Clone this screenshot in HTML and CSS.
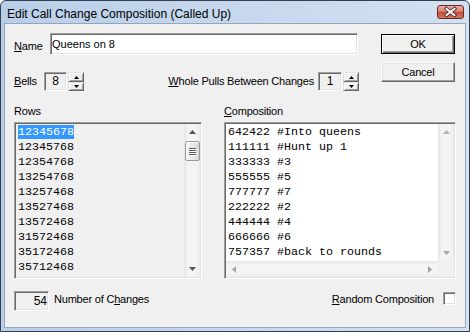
FILE: index.html
```html
<!DOCTYPE html>
<html>
<head>
<meta charset="utf-8">
<link rel="stylesheet" href="styles.css">
</head>
<body>
<div class="window">
  <div class="titlebar">
    <span class="title">Edit Call Change Composition (Called Up)</span>
    <div class="close">
      <svg width="27" height="14" viewBox="0 0 27 14">
        <defs>
          <linearGradient id="cg" x1="0" y1="0" x2="0" y2="1">
            <stop offset="0" stop-color="#eab2a6"/>
            <stop offset="0.45" stop-color="#d98373"/>
            <stop offset="0.5" stop-color="#c44a3c"/>
            <stop offset="1" stop-color="#d97a66"/>
          </linearGradient>
        </defs>
        <rect x="0.5" y="0.5" width="26" height="13" rx="2.5" fill="url(#cg)" stroke="#6b2b24"/>
        <path d="M9.5 3.8 L17.5 10.2 M17.5 3.8 L9.5 10.2" stroke="#4a2420" stroke-width="3.6" stroke-linecap="square"/>
        <path d="M9.5 3.8 L17.5 10.2 M17.5 3.8 L9.5 10.2" stroke="#ffffff" stroke-width="2" stroke-linecap="square"/>
      </svg>
    </div>
  </div>
  <div class="client">
    <div class="top">
      <div class="top-left">
        <div class="name-row">
          <span class="name-label"><u>N</u>ame</span>
          <div class="name-input sunken">Queens on 8</div>
        </div>
        <div class="bells-row">
          <span class="bells-label"><u>B</u>ells</span>
          <div class="num-edit sunken w23">8</div>
          <div class="spin">
            <div class="spin-btn up"><svg width="5" height="3" viewBox="0 0 5 3"><polygon points="0,3 2.5,0 5,3" fill="#000"/></svg></div>
            <div class="spin-btn down"><svg width="5" height="3" viewBox="0 0 5 3"><polygon points="0,0 2.5,3 5,0" fill="#000"/></svg></div>
          </div>
          <span class="pulls-label"><u>W</u>hole Pulls Between Changes</span>
          <div class="num-edit sunken w24">1</div>
          <div class="spin">
            <div class="spin-btn up"><svg width="5" height="3" viewBox="0 0 5 3"><polygon points="0,3 2.5,0 5,3" fill="#000"/></svg></div>
            <div class="spin-btn down"><svg width="5" height="3" viewBox="0 0 5 3"><polygon points="0,0 2.5,3 5,0" fill="#000"/></svg></div>
          </div>
        </div>
      </div>
      <div class="buttons">
        <div class="btn default">OK</div>
        <div class="btn cancel">Cancel</div>
      </div>
    </div>

    <div class="panes">
      <div class="pane">
        <div class="pane-label">Rows</div>
        <div class="list rows sunken">
          <div class="rows-content">
            <div class="row"><span class="sel">12345678</span></div>
            <div class="row">12345768</div>
            <div class="row">12354768</div>
            <div class="row">13254768</div>
            <div class="row">13257468</div>
            <div class="row">13527468</div>
            <div class="row">13572468</div>
            <div class="row">31572468</div>
            <div class="row">35172468</div>
            <div class="row">35712468</div>
          </div>
          <div class="vscroll">
            <div class="sb-btn"><svg width="7" height="4" viewBox="0 0 7 4"><polygon points="0,4 3.5,0 7,4" fill="#555555"/></svg></div>
            <div class="thumb">
              <div class="grip"></div><div class="grip"></div><div class="grip"></div><div class="grip"></div>
            </div>
            <div class="sb-space"></div>
            <div class="sb-btn"><svg width="7" height="4" viewBox="0 0 7 4"><polygon points="0,0 3.5,4 7,0" fill="#555555"/></svg></div>
          </div>
        </div>
      </div>
      <div class="pane">
        <div class="pane-label"><u>C</u>omposition</div>
        <div class="list comp sunken">
          <div class="comp-content">
            <div class="line">642422 #Into queens</div>
            <div class="line">111111 #Hunt up 1</div>
            <div class="line">333333 #3</div>
            <div class="line">555555 #5</div>
            <div class="line">777777 #7</div>
            <div class="line">222222 #2</div>
            <div class="line">444444 #4</div>
            <div class="line">666666 #6</div>
            <div class="line">757357 #back to rounds</div>
          </div>
          <div class="vscroll comp-v">
            <div class="sb-btn"><svg width="7" height="4" viewBox="0 0 7 4"><polygon points="0,4 3.5,0 7,4" fill="#b4b4b4"/></svg></div>
            <div class="sb-space"></div>
            <div class="sb-btn"><svg width="7" height="4" viewBox="0 0 7 4"><polygon points="0,0 3.5,4 7,0" fill="#a8a8a8"/></svg></div>
          </div>
          <div class="hscroll">
            <div class="sb-btn h"><svg width="4" height="7" viewBox="0 0 4 7"><polygon points="4,0 0,3.5 4,7" fill="#a8a8a8"/></svg></div>
            <div class="sb-space"></div>
            <div class="sb-btn h"><svg width="4" height="7" viewBox="0 0 4 7"><polygon points="0,0 4,3.5 0,7" fill="#a0a0a0"/></svg></div>
          </div>
          <div class="corner"></div>
        </div>
      </div>
    </div>

    <div class="footer">
      <div class="num-box sunken">54</div>
      <span class="num-label">Number of C<u>h</u>anges</span>
      <div class="random">
        <span class="random-label"><u>R</u>andom Composition</span>
        <div class="checkbox sunken"></div>
      </div>
    </div>
  </div>
</div>
</body>
</html>
```

FILE: styles.css
```css
* { box-sizing: border-box; }
html, body { margin: 0; padding: 0; }
body {
  width: 470px;
  height: 332px;
  overflow: hidden;
  background: #ffffff;
  font-family: "Liberation Sans", Arial, sans-serif;
  font-size: 11px;
  color: #000;
}
u { text-decoration: underline; text-underline-offset: 1px; }

.window {
  width: 470px;
  height: 332px;
  display: flex;
  flex-direction: column;
  border: 1px solid #34404f;
  border-radius: 6px 6px 0 0;
  background: linear-gradient(to right, #b9cfe9, #d3e1f2);
}

.titlebar {
  height: 22px;
  display: flex;
  align-items: flex-start;
  padding-left: 6px;
  flex: none;
}
.title {
  font-size: 12px;
  line-height: 14px;
  margin-top: 6px;
  color: #000;
}
.close {
  margin-left: auto;
  margin-top: 4px;
  margin-right: 5px;
  width: 27px;
  height: 14px;
  display: flex;
}

.client {
  flex: 1;
  margin: 0 3px 3px 3px;
  border: 1px solid #91a6c0;
  background: #f0f0f0;
  padding: 9px 9px 0 9px;
  display: flex;
  flex-direction: column;
}

.sunken {
  border: 1px solid;
  border-color: #a0a0a0 #ffffff #ffffff #a0a0a0;
  padding: 1px;
  box-shadow: inset 1px 1px #696969, inset -1px -1px #e3e3e3;
}

.lbl, .name-label, .bells-label, .pulls-label, .pane-label, .num-label, .random-label, .btn {
  letter-spacing: -0.2px;
}

.top { display: flex; align-items: flex-start; }
.top-left { width: 345px; display: flex; flex-direction: column; }

.name-row { display: flex; height: 22px; }
.name-label { width: 36px; line-height: 13px; margin-top: 7px; }
.name-input {
  width: 308px;
  height: 22px;
  background: #fff;
  padding: 4px 2px 0 1px;
  line-height: 13px;
  white-space: nowrap;
}

.bells-row {
  display: flex;
  align-items: center;
  height: 19px;
  margin-top: 17px;
}
.bells-label { width: 30px; line-height: 13px; }
.pulls-label { margin-left: auto; margin-right: 4px; line-height: 13px; }

.num-edit {
  height: 19px;
  background: #f0f0f0;
  text-align: center;
  font-size: 12px;
  line-height: 17px;
  padding-top: 0;
  padding-bottom: 0;
}
.w23 { width: 23px; }
.w24 { width: 24px; }

.spin {
  display: flex;
  flex-direction: column;
  width: 16px;
  height: 19px;
  margin-left: 1px;
}
.spin-btn {
  background: #f0f0f0;
  border: 1px solid;
  border-color: #e3e3e3 #696969 #696969 #e3e3e3;
  box-shadow: inset 1px 1px #ffffff, inset -1px -1px #a0a0a0;
  display: flex;
  align-items: center;
  justify-content: center;
}
.spin-btn.up { height: 10px; }
.spin-btn.down { height: 9px; }
.spin-btn svg { display: block; }

.buttons {
  margin-left: 22px;
  width: 74px;
  display: flex;
  flex-direction: column;
}
.btn {
  height: 20px;
  width: 74px;
  background: #f0f0f0;
  border: 1px solid;
  border-color: #ffffff #696969 #696969 #ffffff;
  box-shadow: inset -1px -1px #a0a0a0, inset 1px 1px #e3e3e3;
  text-align: center;
  line-height: 18px;
}
.btn.default {
  margin-top: 1px;
  border: 1px solid #000;
  box-shadow: inset 1px 1px #ffffff, inset -1px -1px #696969, inset -2px -2px #a0a0a0;
}
.btn.cancel { margin-top: 8px; }

.panes {
  display: grid;
  grid-template-columns: 188px 232px;
  column-gap: 22px;
  margin-top: 14px;
}
.pane-label { line-height: 13px; margin-bottom: 4px; }

.list { height: 157px; }
.rows {
  display: flex;
  background: #f0f0f0;
}
.rows-content {
  flex: 1;
  padding: 1px 0 0 2px;
  font-family: "Liberation Mono", "Courier New", monospace;
  font-size: 11.67px;
  line-height: 15px;
  overflow: hidden;
  color: #000;
}
.row { height: 15px; white-space: pre; }
.sel {
  display: inline-block;
  vertical-align: top;
  background: #3399ff;
  color: #fff;
  line-height: 14px;
  height: 14px;
}

.vscroll {
  width: 16px;
  display: flex;
  flex-direction: column;
  background: linear-gradient(to right, #e6e6e6, #f4f4f4 25%, #f4f4f4 75%, #ececec);
}
.sb-btn {
  height: 16px;
  flex: none;
  display: flex;
  align-items: center;
  justify-content: center;
}
.sb-btn.h { width: 16px; height: 16px; }
.sb-btn svg { display: block; }
.sb-space { flex: 1; }
.thumb {
  height: 20px;
  margin: 1px 0 0 1px;
  border: 1px solid #9a9a9a;
  border-radius: 2px;
  background: linear-gradient(to right, #f6f6f6, #e9e9e9 50%, #d6d6d6);
  box-shadow: inset 1px 1px #ffffff;
  display: flex;
  flex-direction: column;
  align-items: center;
  justify-content: center;
  gap: 1px;
}
.grip {
  width: 7px;
  height: 1px;
  background: #5a5a5a;
  box-shadow: 0 1px #ffffff;
}

.comp {
  display: grid;
  grid-template-columns: 1fr 16px;
  grid-template-rows: 1fr 16px;
  background: #ffffff;
}
.comp-content {
  padding: 1px 0 0 2px;
  font-family: "Liberation Mono", "Courier New", monospace;
  font-size: 11.67px;
  line-height: 15px;
  overflow: hidden;
  color: #000;
}
.line { height: 15px; white-space: pre; }
.hscroll {
  display: flex;
  background: linear-gradient(to bottom, #e6e6e6, #f4f4f4 25%, #f4f4f4 75%, #ececec);
}
.corner { background: #f0f0f0; }

.footer {
  display: flex;
  align-items: flex-start;
  margin-top: 12px;
}
.num-box {
  width: 35px;
  height: 20px;
  background: #f0f0f0;
  text-align: right;
  font-size: 12px;
  line-height: 18px;
  padding-top: 0;
  padding-bottom: 0;
}
.num-label { margin-left: 5px; margin-top: 2px; line-height: 13px; }
.random { margin-left: auto; display: flex; align-items: flex-start; }
.random-label { margin-top: 2px; line-height: 13px; }
.checkbox {
  width: 13px;
  height: 13px;
  margin-left: 9px;
  margin-top: 1px;
  background: #fff;
}
```
